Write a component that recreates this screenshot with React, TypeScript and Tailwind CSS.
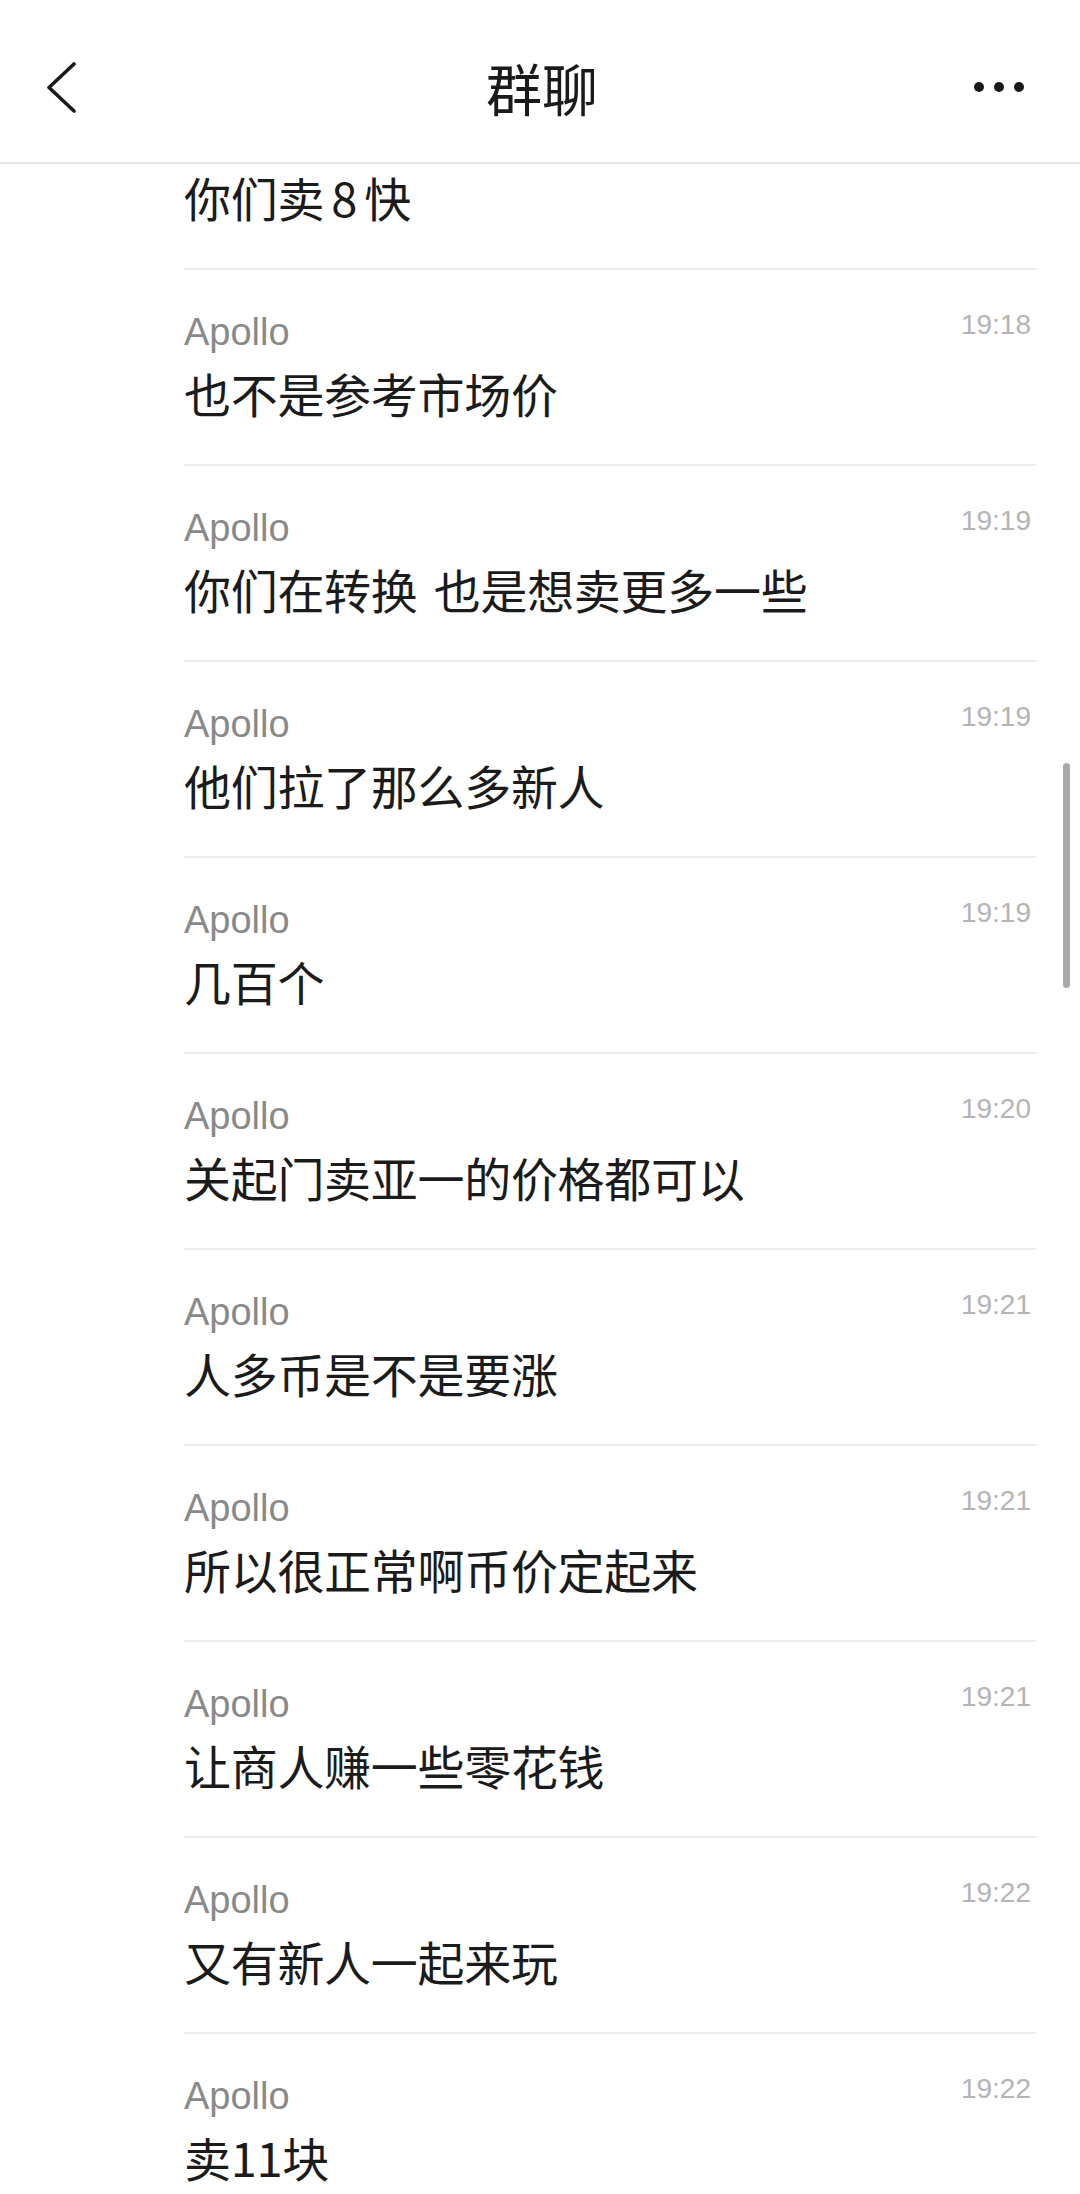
import React from "react";

const rows: { time: string; text: string }[] = [
  { time: "19:18", text: "也不是参考市场价" },
  { time: "19:19", text: "你们在转换 也是想卖更多一些" },
  { time: "19:19", text: "他们拉了那么多新人" },
  { time: "19:19", text: "几百个" },
  { time: "19:20", text: "关起门卖亚一的价格都可以" },
  { time: "19:21", text: "人多币是不是要涨" },
  { time: "19:21", text: "所以很正常啊币价定起来" },
  { time: "19:21", text: "让商人赚一些零花钱" },
  { time: "19:22", text: "又有新人一起来玩" },
  { time: "19:22", text: "卖11块" },
];

const cjk = "font-['Noto_Sans_CJK_SC','Noto_Sans',sans-serif]";

function Row({ time, text }: { time: string; text: string }) {
  return (
    <div className="ml-[184px] mr-[44px] h-[196px] shrink-0 border-b-2 border-[#ececec] pt-[40px] box-border">
      <div className="flex items-start justify-between">
        <span className="font-['Liberation_Sans',Arial,sans-serif] text-[38px] leading-[44px] text-[#8a8a8a]">
          Apollo
        </span>
        <span className="-mt-[2px] pr-[5px] font-['Liberation_Sans',Arial,sans-serif] text-[28px] leading-[34px] text-[#b4b4b4]">
          {time}
        </span>
      </div>
      <div className={`${cjk} mt-[9px] text-[47px] leading-[60px] tracking-[-0.3px] text-[#1b1b1b] whitespace-pre [word-spacing:6px]`}>
        {text}
      </div>
    </div>
  );
}

export default function App() {
  return (
    <div className="relative h-[2194px] w-[1080px] overflow-hidden bg-white">
      {/* Header */}
      <div className="grid h-[164px] grid-cols-[1fr_auto_1fr] items-center border-b-2 border-[#e6e6e6] pt-[11px] box-border">
        <div className="flex items-center pl-[46px]">
          <svg width="32" height="52" viewBox="0 0 32 52" fill="none">
            <polyline
              points="28,3 3,26.5 28,50"
              stroke="#1a1a1a"
              strokeWidth="3.6"
              strokeLinecap="round"
              strokeLinejoin="round"
            />
          </svg>
        </div>
        <div className={`${cjk} pl-[4px] text-[56px] font-normal leading-[64px] text-[#1a1a1a]`}>群聊</div>
        <div className="flex items-center justify-end gap-[10px] pr-[56px]">
          <span className="h-[10px] w-[10px] rounded-full bg-[#1a1a1a]" />
          <span className="h-[10px] w-[10px] rounded-full bg-[#1a1a1a]" />
          <span className="h-[10px] w-[10px] rounded-full bg-[#1a1a1a]" />
        </div>
      </div>

      {/* List */}
      <div className="flex flex-col">
        <div className="ml-[184px] mr-[44px] flex h-[106px] shrink-0 flex-col justify-end border-b-2 border-[#ececec] pb-[41px] box-border">
          <div className={`${cjk} text-[47px] leading-[60px] tracking-[-0.3px] text-[#1b1b1b] whitespace-pre [word-spacing:-3px]`}>你们卖 8 快</div>
        </div>
        {rows.map((r, i) => (
          <Row key={i} time={r.time} text={r.text} />
        ))}
      </div>

      {/* Scroll indicator */}
      <div className="absolute left-[1063px] top-[763px] h-[225px] w-[7px] rounded-full bg-[#a9a9a9]" />
    </div>
  );
}
